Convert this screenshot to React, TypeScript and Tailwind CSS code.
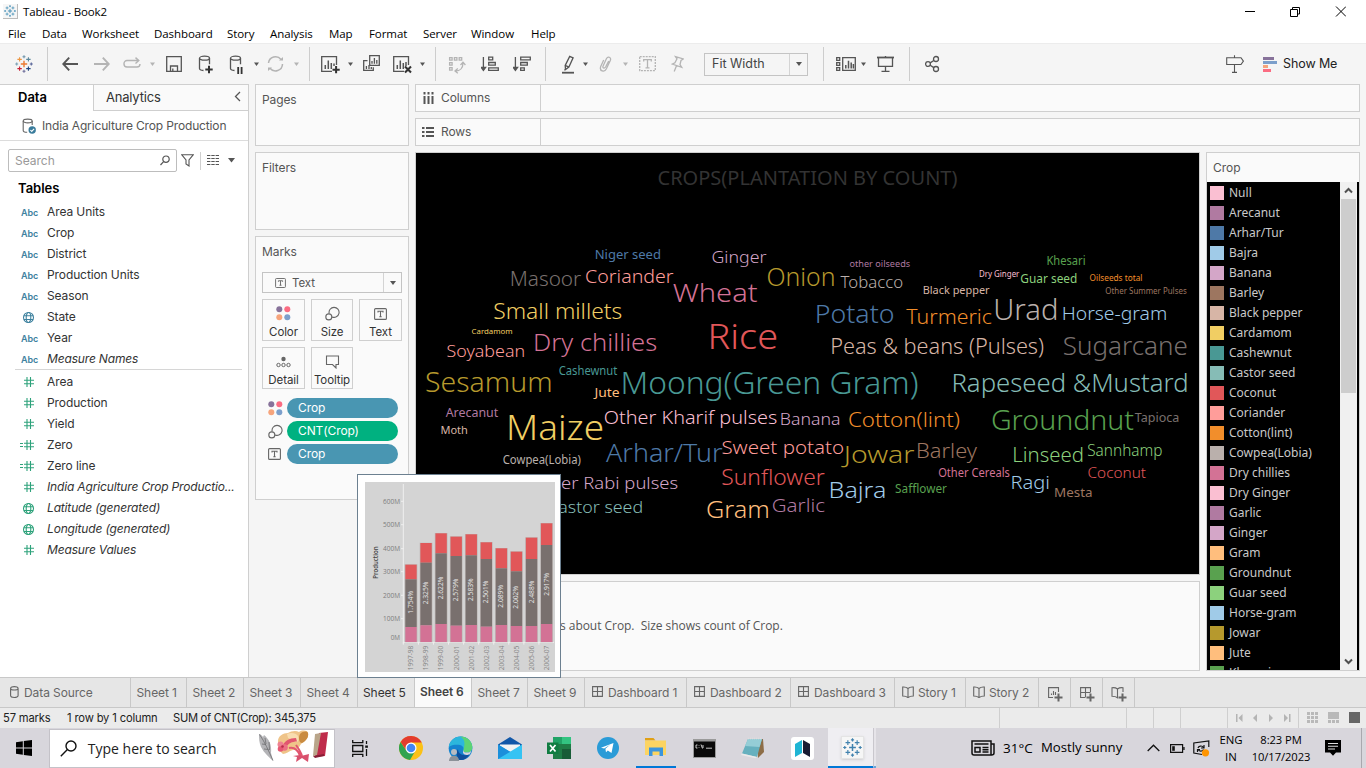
import React from "react";

type P = { w: number; h?: number; c?: string; children?: React.ReactNode };

const Ico = ({ w, h = 20, c = "", children }: P) => (
  <svg width={w} height={h} viewBox={`0 0 ${w} ${h}`} fill="none" stroke="currentColor" strokeWidth="1.3" className={"shrink-0 " + c}>
    {children}
  </svg>
);

const Caret = ({ c = "" }: { c?: string }) => (
  <svg width="5" height="20" viewBox="0 0 5 20" className={"shrink-0 " + c} fill="currentColor">
    <path d="M0 8.5h5L2.5 12z" />
  </svg>
);

const Sep = ({ c = "" }: { c?: string }) => <div className={"h-[34px] w-px shrink-0 bg-[#cdcdcd] " + c} />;

const plus = (x: number, y: number, r: number) => `M${x - r} ${y}h${2 * r}M${x} ${y - r}v${2 * r}`;

function TableauMark({ color, s = 18, c = "" }: { color?: string; s?: number; c?: string }) {
  const col = (v: string) => color || v;
  return (
    <svg width={s} height={s} viewBox="0 0 18 18" fill="none" strokeWidth="1.1" className={"shrink-0 " + c}>
      <path d={plus(9, 9, 3.2)} stroke={col("#eb7a31")} strokeWidth="1.4" />
      <path d={plus(4.6, 4.4, 2.2)} stroke={col("#ec9540")} />
      <path d={plus(13.4, 4.4, 2.2)} stroke={col("#5b879b")} />
      <path d={plus(4.6, 13.6, 2.2)} stroke={col("#c72035")} />
      <path d={plus(13.4, 13.6, 2.2)} stroke={col("#1f447e")} />
      <path d={plus(9, 1.8, 1.5)} stroke={col("#6f95ab")} />
      <path d={plus(9, 16.2, 1.5)} stroke={col("#6f6f9b")} />
      <path d={plus(1.7, 9, 1.5)} stroke={col("#7aa0b5")} />
      <path d={plus(16.3, 9, 1.5)} stroke={col("#59659a")} />
    </svg>
  );
}

const menus: [string, string][] = [
  ["File", "w-[34px]"],
  ["Data", "w-[40px]"],
  ["Worksheet", "w-[72px]"],
  ["Dashboard", "w-[73px]"],
  ["Story", "w-[43px]"],
  ["Analysis", "w-[59px]"],
  ["Map", "w-[40px]"],
  ["Format", "w-[54px]"],
  ["Server", "w-[48px]"],
  ["Window", "w-[60px]"],
  ["Help", "w-[40px]"],
];

function Toolbar() {
  const off = "text-[#b4b4b4] ";
  return (
    <div className="flex h-[41px] items-center border-t border-[#ececec] bg-[#f5f5f5] text-[#555]">
      <TableauMark c="ml-[15px]" />
      <Sep c="ml-[14px]" />
      <Ico w={16} c="ml-[14px]"><path d="M7.2 3.6L1.2 10l6 6.4M1.2 10H16" strokeWidth="1.9" /></Ico>
      <Ico w={16} c={off + "ml-[16px]"}><path d="M8.8 3.6l6 6.4-6 6.4M14.8 10H0" strokeWidth="1.9" /></Ico>
      <Ico w={18} c={off + "ml-[13px]"}><path d="M7 13H4a3 3 0 01-3-3v-.5a3 3 0 013-3h11M7 13h7a3 3 0 003-3M12.5 3.6L15.8 6.5l-3.3 3" strokeWidth="1.4" /></Ico>
      <Caret c={off + "ml-[9px]"} />
      <Ico w={16} c="ml-[11px]"><path d="M.7 2.7h14.6v14.6H.7zM4.5 17v-5h7v5M6.8 17v-2.6" /></Ico>
      <Ico w={15} c="ml-[16px]">
        <path d="M1.5 4.2v10.3c0 1 1.5 1.8 4 2M11.5 4.2v6" /><ellipse cx="6.5" cy="4.2" rx="5" ry="2" />
        <path d="M7.3 15.5h7.4M11 11.8v7.4" stroke="#333" strokeWidth="2" />
      </Ico>
      <Ico w={14} c="ml-[16px]">
        <path d="M1.5 4.2v10.3c0 1 1.5 1.8 4 2M11.5 4.2v6" /><ellipse cx="6.5" cy="4.2" rx="5" ry="2" />
        <path d="M9.2 13v7M12.6 13v7" stroke="#333" strokeWidth="1.8" />
      </Ico>
      <Caret c="ml-[11px]" />
      <Ico w={17} c={off + "ml-[8px]"}><path d="M1.5 9A7 7 0 0114 5.5M15.5 10A7 7 0 013 14.2" strokeWidth="1.5" /><path d="M12 6.5h4V3zM5 13.5H1V17z" fill="currentColor" stroke="none" /></Ico>
      <Caret c={off + "ml-[10px]"} />
      <Sep c="ml-[10px]" />
      <Ico w={19} c="ml-[11px]">
        <path d="M15.5 11V2.6H.7v14.7H11" /><path d="M4.3 15V11M7.3 15V6.5M10.3 15V9M13 12V9.5" strokeWidth="1.5" />
        <path d="M11.5 15.7h7.2M15.1 12.1v7.2" stroke="#333" strokeWidth="2" />
      </Ico>
      <Caret c="ml-[8px]" />
      <Ico w={17} c="ml-[10px]">
        <path d="M6.7 1.7h9.6v9.6H6.7zM4.5 6.7H.7v9.6h9.6v-3" /><path d="M9 9.8V7M11.4 9.8V4M13.8 9.8V6M3.4 15v-3M6 15v-4M8.3 15v-2" />
      </Ico>
      <Ico w={19} c="ml-[13px]">
        <path d="M15.5 11V2.6H.7v14.7H11" /><path d="M4.3 15V11M7.3 15V6.5M10.3 15V9M13 12V8" strokeWidth="1.5" />
        <path d="M12 12.5l6 6M18 12.5l-6 6" stroke="#333" strokeWidth="2.1" />
      </Ico>
      <Caret c="ml-[8px]" />
      <Sep c="ml-[10px]" />
      <Ico w={18} c={off + "ml-[12px]"}>
        <path d="M1.6 3.6h2.5v2.5H1.6zM6.4 3.6h2.5v2.5H6.4zM11.2 3.6h2.5v2.5h-2.5zM1.6 8.6h2.5v2.5H1.6zM1.6 13.6h2.5v2.5H1.6z" />
        <path d="M7.5 17c4.5 0 7.5-3 7.5-8M9.8 14.5L7 17l2.8 2.3M12.5 11L15 8.2l2.4 2.8" />
      </Ico>
      <Ico w={18} c="ml-[15px]"><path d="M2.4 3v12M.2 13.5l2.2 3 2.2-3zM7.7 3.2h4v2.6h-4zM7.7 8.5h6.6v2.6H7.7zM7.7 13.8h9.6v2.6H7.7z" /></Ico>
      <Ico w={18} c="ml-[14px]"><path d="M2.4 3v12M.2 13.5l2.2 3 2.2-3zM7.7 3.2h9.6v2.6H7.7zM7.7 8.5h6.6v2.6H7.7zM7.7 13.8h3.6v2.6H7.7z" /></Ico>
      <Sep c="ml-[14px]" />
      <Ico w={13} c="ml-[16px]"><path d="M7.7 2.4l3.4 1.4-4.2 9.3-3.400 2.400-.3-4.100zM3.200 11.400l3.700 1.700M4 14.500l-1.500 1.800" /><path d="M0 18.700h12" strokeWidth="1.800" /></Ico>
      <Caret c="ml-[8px]" />
      <Ico w={13} c={off + "ml-[11px]"}><path d="M9.7 7L6.6 13c-1.3 2-3.3 1-2.5-1l3.3-7.2c1.5-3 5-1.6 4 1.500l-4 8.500c-2 4-7 2.500-5.800-2L4.700 6" /></Ico>
      <Caret c={off + "ml-[11px]"} />
      <Ico w={17} c={off + "ml-[11px]"}><path d="M.7 2.700h15.600v14H.7z" strokeDasharray="2 1" /><path d="M4.700 7.500V5.600h7.600v1.900M8.500 5.600v8.200M6.500 13.800h4" /></Ico>
      <Ico w={13} c={off + "ml-[15px]"}><path d="M4.500 2.700l7.800 2.300-2.300 1.500-1 4.200 1.700 2.700-9.500-3.300 2.700-1.300L6 4.900zM5.500 11.800l-2.300 5.700" /></Ico>
      <div className="ml-[20px] flex h-[23px] w-[104px] shrink-0 items-center border border-[#c4c4c4] pl-[7px] font-['Inter'] text-[12.5px] text-[#444]">
        <span className="flex-1">Fit Width</span>
        <span className="flex h-full w-[18px] items-center justify-center border-l border-[#d4d4d4]">
          <svg width="6" height="4"><path d="M0 0h6L3 4z" fill="#555" /></svg>
        </span>
      </div>
      <Sep c="ml-[15px]" />
      <Ico w={20} c="ml-[12px]">
        <path d="M6.7 3.7h12.6v12.6H6.7zM.7 3.6h3v2.7h-3zM.7 8.7h3v2.7h-3zM.7 13.6h3v2.7h-3z" /><path d="M9.8 14.5V11M12.5 14.5V6.8M15.2 14.5V8.5M17.400 14.500V10" strokeWidth="1.500" />
      </Ico>
      <Caret c="ml-[5px]" />
      <Ico w={17} c="ml-[11px]"><path d="M0 3.5h17" strokeWidth="1.8" /><path d="M1.5 3.5v8.8h14V3.5M8.5 12.5v5M4.5 17.3h8M8.5 2v2" /></Ico>
      <Sep c="ml-[15px]" />
      <Ico w={15} c="ml-[15px]"><circle cx="3" cy="10" r="2.4" /><circle cx="11" cy="5" r="2.5" /><circle cx="11" cy="15" r="2.5" /><path d="M5.2 8.9l3.6-2.4M5.2 11.2l3.6 2.4" /></Ico>
      <Ico w={18} c="ml-[286px]"><path d="M.7 3.7H15l2.4 3.4-2.4 3.4H.7zM8.5 1.2v2.5M8.5 10.5v8M6 18.4h5" strokeWidth="1.1" /></Ico>
      <svg width="14" height="15" className="ml-[19px] shrink-0"><path fill="#87729a" d="M0 0h11v3H0z" /><path fill="#7c9fcb" d="M0 4h14v3H0z" /><path fill="#f6a47c" d="M0 8h5v3H0z" /><path fill="#fb6c82" d="M0 12h8v3H0z" /></svg>
      <span className="ml-[6px] font-['Inter'] text-[12.5px] tracking-[-0.1px] text-[#222]">Show Me</span>
    </div>
  );
}

const blue = "#3f829f";
const green = "#2ea27b";

function FieldIcon({ k, color }: { k: string; color: string }) {
  if (k === "abc") return <span className="w-[17px] pt-[2px] font-['Inter'] text-[9px] font-semibold leading-[12px] tracking-[-0.1px] text-[#3f829f]">Abc</span>;
  return (
    <svg width="17" height="14" viewBox="0 0 17 14" fill="none" stroke={color} strokeWidth="1.1" className="overflow-visible">
      {k === "geo" ? (
        <><circle cx="7.5" cy="7.500" r="5" /><ellipse cx="7.5" cy="7.500" rx="2.300" ry="5" /><path d="M3 5.700h9M3 9.500h9" /></>
      ) : (
        <path d="M6 2v10M9.500 2v10M3 5.200h10M3 8.800h10" />
      )}
      {k === "calc" && <path d="M-1 5.500h3M-1 8.500h3" />}
    </svg>
  );
}

const dims: [string, string, boolean?][] = [
  ["abc", "Area Units"], ["abc", "Crop"], ["abc", "District"], ["abc", "Production Units"], ["abc", "Season"], ["geo", "State"], ["abc", "Year"], ["abc", "Measure Names", true],
];
const measures: [string, string, boolean?][] = [
  ["num", "Area"], ["num", "Production"], ["num", "Yield"], ["calc", "Zero"], ["calc", "Zero line"], ["num", "India Agriculture Crop Productio...", true], ["geo", "Latitude (generated)", true], ["geo", "Longitude (generated)", true], ["num", "Measure Values", true],
];

function Field({ f, color }: { f: [string, string, boolean?]; color: string }) {
  return (
    <div className="flex h-[21px] items-center pl-[21px]">
      <FieldIcon k={f[0]} color={color} />
      <span className={"ml-[9px] whitespace-nowrap " + (f[2] ? "italic tracking-[-0.16px]" : "tracking-[-0.1px]")}>{f[1]}</span>
    </div>
  );
}

function DataPane() {
  return (
    <div className="h-[593px] w-[249px] shrink-0 border-r border-t border-[#cfcfcf] bg-white font-['Inter'] text-[12px] text-[#333]">
      <div className="flex h-[26px]">
        <div className="w-[93px] pl-[18px] pt-[3px] text-[13px] font-semibold leading-[18px] text-black">Data</div>
        <div className="flex flex-1 justify-between border-b border-l border-[#cfcfcf] bg-[#fafafa] pl-[12px] pr-[7px] pt-[3px] text-[13px] leading-[18px] tracking-[-0.2px]">
          <span>Analytics</span>
          <svg width="7" height="11" className="mt-[3px]"><path d="M6 1L1.5 5.5 6 10" fill="none" stroke="#555" strokeWidth="1.3" /></svg>
        </div>
      </div>
      <div className="flex h-[30px] items-center border-b border-[#dcdcdc] pl-[22px] text-[#555]">
        <svg width="14" height="16" fill="none" stroke="#666" strokeWidth="1.1"><path d="M1.2 3v9.5c0 1 1.4 1.8 4 1.8M10.2 3v4" /><ellipse cx="5.7" cy="3" rx="4.5" ry="1.9" /><circle cx="10.2" cy="12" r="3.7" fill="#3a7c9c" stroke="none" /><path d="M8.4 12l1.3 1.4 2.4-2.6" stroke="#fff" /></svg>
        <span className="ml-[6px] whitespace-nowrap tracking-[-0.15px]">India Agriculture Crop Production</span>
      </div>
      <div className="mt-[8px] flex h-[23px] items-center pl-[8px]">
        <div className="flex h-[23px] w-[169px] items-center justify-between rounded-[2px] border border-[#bdbdbd] pl-[6px] pr-[6px] text-[#999]">
          <span>Search</span>
          <svg width="10" height="11" fill="none" stroke="#555" strokeWidth="1.2"><circle cx="6" cy="4.2" r="3.2" /><path d="M3.6 6.6L.5 10" /></svg>
        </div>
        <svg width="13" height="13" className="ml-[4px]" fill="none" stroke="#555" strokeWidth="1.1"><path d="M.8.8h11.4L8 6v6L5 10V6z" /></svg>
        <div className="ml-[6px] h-[18px] w-px bg-[#d0d0d0]" />
        <svg width="12" height="10" className="-mt-px ml-[6px]" stroke="#555" strokeWidth="1"><path d="M0 .5h12M0 3.500h12M0 6.500h12M0 9.500h12" strokeDasharray="3.400 .9" /></svg>
        <svg width="7" height="5" className="ml-[9px]"><path d="M0 0h7L3.500 4.500z" fill="#555" /></svg>
      </div>
      <div className="mt-[6px] h-[23px] pl-[18px] text-[13px] font-semibold leading-[20px] text-black">Tables</div>
      {dims.map((f) => <Field key={f[1]} f={f} color={blue} />)}
      <div className="mb-px ml-[15px] mr-[6px] border-t border-[#d6d6d6]" />
      {measures.map((f) => <Field key={f[1]} f={f} color={green} />)}
    </div>
  );
}

const Dots = () => (
  <svg width="15" height="15"><circle cx="3.3" cy="3.3" r="3" fill="#87729a" /><circle cx="11.300" cy="3.300" r="3" fill="#fb6c82" /><circle cx="3.300" cy="11.300" r="3" fill="#f6a47c" /><circle cx="11.300" cy="11.300" r="3" fill="#7c9fcb" /></svg>
);
const SizeIco = () => (
  <svg width="15" height="15" fill="none" stroke="#666" strokeWidth="1.1"><path d="M4.200 7.500A5 5 0 117 10.900" /><circle cx="3.800" cy="10.900" r="3" /></svg>
);
const TIco = ({ w = 13, h = 12 }: { w?: number; h?: number }) => (
  <svg width={w} height={h} viewBox="0 0 13 12" fill="none" stroke="#666" strokeWidth="1.1"><rect x=".6" y=".6" width="11.8" height="10.8" rx="1" /><path d="M4 4.500V3.300h5v1.200M6.500 3.300v5.400M5.300 8.700h2.400" /></svg>
);

function MarkBtn({ w, label, children }: { w: string; label: string; children: React.ReactNode }) {
  return (
    <div className={"flex h-[42px] flex-col items-center border border-[#cfcfcf] bg-[#fafafa] text-[11.5px] tracking-[-0.1px] text-[#333] " + w}>
      <div className="flex h-[26px] items-center pt-[1px]">{children}</div>
      <span className="whitespace-nowrap leading-[13px]">{label}</span>
    </div>
  );
}

function Marks() {
  const pills: [React.ReactNode, string, string][] = [
    [<Dots />, "Crop", "bg-[#4996b2]"],
    [<SizeIco />, "CNT(Crop)", "bg-[#00b180]"],
    [<TIco />, "Crop", "bg-[#4996b2]"],
  ];
  return (
    <div className="mt-[6px] h-[264px] border border-[#cfcfcf] bg-[#fafafa] px-[6px] pt-[7px]">
      <div className="leading-[16px]">Marks</div>
      <div className="mt-[12px] flex h-[21px] items-center border border-[#c4c4c4] pl-[12px] text-[11.5px]">
        <TIco w={11} h={10} />
        <span className="ml-[6px] flex-1 pt-[2px]">Text</span>
        <span className="flex h-full w-[18px] items-center justify-center border-l border-[#d4d4d4]"><svg width="6" height="4"><path d="M0 0h6L3 4z" fill="#555" /></svg></span>
      </div>
      <div className="mt-[6px] flex gap-[6px]">
        <MarkBtn w="w-[43px]" label="Color"><Dots /></MarkBtn>
        <MarkBtn w="w-[42px]" label="Size"><SizeIco /></MarkBtn>
        <MarkBtn w="w-[43px]" label="Text"><TIco /></MarkBtn>
      </div>
      <div className="mt-[6px] flex gap-[6px]">
        <MarkBtn w="w-[43px]" label="Detail">
          <svg width="15" height="12" fill="none" stroke="#666"><circle cx="7.500" cy="3" r="2.200" fill="#666" stroke="none" /><circle cx="2.500" cy="9" r="1.700" /><circle cx="7.500" cy="9" r="1.700" /><circle cx="12.500" cy="9" r="1.700" /></svg>
        </MarkBtn>
        <MarkBtn w="w-[42px]" label="Tooltip">
          <svg width="15" height="14" fill="none" stroke="#666" strokeWidth="1.100"><path d="M1.500 1h12v8.500h-2.500v3.500l-3.500-3.500h-6z" /></svg>
        </MarkBtn>
      </div>
      <div className="mt-[9px] flex flex-col gap-[3px]">
        {pills.map((p, i) => (
          <div key={i} className="flex h-[20px] items-center pl-[6px]">
            <div className="w-[19px]">{p[0]}</div>
            <div className={"flex h-[20px] w-[111px] items-center rounded-full pl-[11px] text-white " + p[2]}>{p[1]}</div>
          </div>
        ))}
      </div>
    </div>
  );
}

const C: Record<string, string> = {
  blue: "#4e79a7", lblue: "#a0cbe8", or: "#f28e2b", lor: "#ffbe7d", gr: "#59a14f", lgr: "#8cd17d", ol: "#b6992d", ye: "#f1ce63", te: "#499894", lte: "#86bcb6", red: "#e15759", pk: "#ff9d9a", gy: "#79706e", lgy: "#bab0ac", mg: "#d37295", lpk: "#fabfd2", pu: "#b07aa1", lpu: "#d4a6c8", br: "#9d7660", lbr: "#d7b5a6",
};

const words: [string, number, number, number, number, string][] = [
  ["Niger seed", 595.3, 660.3, 259.3, 13, "blue"], ["Ginger", 712.3, 765.7, 263.3, 16.8, "lpu"], ["Masoor", 510.7, 580.3, 286.3, 19.3, "gy"],
  ["Coriander", 586, 672.7, 283, 17.6, "pk"], ["Wheat", 674, 756.3, 302, 25.8, "mg"], ["Onion", 767.7, 834.3, 286, 25, "ol"],
  ["Small millets", 494.3, 621.3, 319, 20.8, "ye"], ["Cardamom", 472, 512.3, 333.7, 7.8, "ye"], ["Soyabean", 447.3, 524.3, 356.8, 16.4, "pk"],
  ["Dry chillies", 534.3, 656, 350.8, 23.3, "mg"], ["Rice", 709.3, 776.3, 348.7, 35, "red"], ["Sesamum", 426.3, 551.3, 392.4, 26, "ol"],
  ["Cashewnut", 559.3, 616.7, 375, 11.6, "te"], ["Jute", 595, 619, 397, 11.8, "lor"], ["Moong(Green Gram)", 622, 917, 393.7, 30, "te"],
  ["Arecanut", 446.3, 497.7, 417, 12, "pu"], ["Moth", 441, 467.3, 434, 11.4, "lbr"], ["Maize", 507.7, 602.3, 439.9, 34, "ye"],
  ["Other Kharif pulses", 604.7, 776.3, 424, 18.2, "lpk"], ["Banana", 780.7, 839.7, 425, 16.6, "lpu"], ["Cowpea(Lobia)", 503.3, 580.3, 464.2, 11.6, "lgy"],
  ["Arhar/Tur", 607.3, 721.3, 462, 25, "blue"], ["Sweet potato", 722.3, 843.3, 453.8, 17.9, "pk"], ["Sunflower", 722.3, 823.7, 485.2, 20.8, "red"],
  ["Other Rabi pulses", 530.5, 677.3, 489, 16.8, "lpu"], ["Castor seed", 548, 642.3, 513.3, 16.8, "lte"], ["Gram", 707.3, 768.7, 518, 24, "lor"],
  ["Garlic", 772.7, 824, 512, 18.6, "pu"], ["other oilseeds", 850, 909.7, 266.7, 9.4, "pu"], ["Tobacco", 841.3, 902.3, 288.3, 15.8, "lgy"],
  ["Black pepper", 923.3, 989, 294, 11.4, "lbr"], ["Dry Ginger", 979.3, 1019, 277, 8, "lpk"], ["Guar seed", 1021, 1076.7, 283, 12.6, "lgr"],
  ["Khesari", 1047, 1085, 265, 11.6, "gr"], ["Oilseeds total", 1090, 1142, 281, 8, "or"], ["Other Summer Pulses", 1105.7, 1186.3, 294, 8, "br"],
  ["Potato", 816, 893.3, 323.2, 24.5, "blue"], ["Turmeric", 907.3, 991, 324.3, 19.6, "or"], ["Urad", 994.7, 1057, 319.6, 28.3, "lgy"],
  ["Horse-gram", 1062.7, 1166.3, 320.1, 18.4, "lblue"], ["Peas & beans (Pulses)", 831.3, 1043, 354.2, 21.2, "lbr"], ["Sugarcane", 1064, 1186.7, 355.4, 24.5, "gy"],
  ["Rapeseed &Mustard", 952.7, 1187.3, 392.1, 25, "lte"], ["Cotton(lint)", 849, 959, 427.2, 19.6, "or"], ["Groundnut", 992.3, 1132.7, 430, 27.2, "gr"],
  ["Tapioca", 1135.3, 1178.7, 422.3, 12, "gy"], ["Jowar", 845, 913.3, 463, 23, "ol"], ["Barley", 917, 976, 458.2, 19.2, "br"],
  ["Linseed", 1013.3, 1083, 462.2, 19.8, "lgr"], ["Sannhamp", 1088, 1161.7, 456.4, 15.6, "lgr"], ["Other Cereals", 938.7, 1009.3, 477, 11.5, "mg"],
  ["Coconut", 1088.3, 1145.3, 478, 14.7, "red"], ["Ragi", 1011.3, 1049, 488.8, 17.6, "lblue"], ["Mesta", 1054.7, 1092, 497, 12.7, "br"],
  ["Bajra", 829.7, 885.3, 498, 21.2, "lblue"], ["Safflower", 895.7, 946.3, 493, 11.6, "gr"],
];

function Cloud() {
  return (
    <svg width="783" height="421" viewBox="416 153 783 421" className="block" fontFamily="'Noto Sans', 'Open Sans', sans-serif">
      <text x="657.500" y="185" fontSize="19.800" fill="#333" textLength="300" lengthAdjust="spacingAndGlyphs">CROPS(PLANTATION BY COUNT)</text>
      {words.map(([t, x0, x1, y, s, c]) => (
        <text key={t} x={x0 - s * 0.05} y={y} fontSize={s * 1.02} fontWeight={s > 13.5 ? 300 : 400} fill={C[c]} textLength={x1 - x0 + s * 0.1} lengthAdjust="spacingAndGlyphs">{t}</text>
      ))}
    </svg>
  );
}

const legend: [string, string][] = [
  ["Null", "lpk"], ["Arecanut", "pu"], ["Arhar/Tur", "blue"], ["Bajra", "lblue"], ["Banana", "lpu"], ["Barley", "br"], ["Black pepper", "lbr"], ["Cardamom", "ye"], ["Cashewnut", "te"], ["Castor seed", "lte"], ["Coconut", "red"], ["Coriander", "pk"], ["Cotton(lint)", "or"], ["Cowpea(Lobia)", "lgy"], ["Dry chillies", "mg"], ["Dry Ginger", "lpk"], ["Garlic", "pu"], ["Ginger", "lpu"], ["Gram", "lor"], ["Groundnut", "gr"], ["Guar seed", "lgr"], ["Horse-gram", "lblue"], ["Jowar", "ol"], ["Jute", "lor"], ["Khesari", "gr"],
];

function Legend() {
  return (
    <div className="flex h-[519px] w-[154px] shrink-0 flex-col border border-[#cfcfcf] bg-[#fafafa]">
      <div className="h-[29px] shrink-0 pl-[6px] pt-[7px] leading-[16px]">Crop</div>
      <div className="flex min-h-0 flex-1 overflow-hidden bg-black">
        <div className="flex-1 pt-px font-['Noto_Sans'] text-[12px] text-[#c9c9c9]">
          {legend.map(([t, c]) => (
            <div key={t} className="flex h-[20px] items-center pl-[3px]">
              <svg width="14" height="14" className="-mt-px shrink-0"><rect width="14" height="14" fill={C[c]} /></svg>
              <span className="ml-[5px] whitespace-nowrap">{t}</span>
            </div>
          ))}
        </div>
        <div className="flex w-[17px] flex-col bg-[#f0f0f0]">
          <svg width="17" height="17"><path d="M5 10.500l3.500-3.500 3.500 3.500" fill="none" stroke="#505050" strokeWidth="2" /></svg>
          <div className="mx-px h-[194px] bg-[#cdcdcd]" />
          <div className="flex-1" />
          <svg width="17" height="17"><path d="M5 6.500l3.500 3.500 3.500-3.500" fill="none" stroke="#505050" strokeWidth="2" /></svg>
        </div>
        <div className="w-[2px]" />
      </div>
    </div>
  );
}

const bars: [string, string, number, number, number, number][] = [
  ["1997-98", "1.754%", 283, 327, 470, 397], ["1998-99", "2.325%", 218, 277, 465, 369], ["1999-00", "2.622%", 189, 249, 461, 354], ["2000-01", "2.579%", 199, 257, 466, 360], ["2001-02", "2.583%", 192, 255, 464, 359],
  ["2002-03", "2.501%", 216, 266, 469, 366], ["2003-04", "2.089%", 234, 294, 464, 379], ["2004-05", "2.002%", 244, 303, 467, 382], ["2005-06", "2.488%", 202, 266, 467, 366], ["2006-07", "2.917%", 159, 224, 461, 343],
];

function Preview() {
  return (
    <div className="absolute left-[357px] top-[474px] h-[204px] w-[204px] border border-[#6c8090] bg-white p-[7px]">
      <svg width="190" height="190" viewBox="45 36 570 570" fontFamily="'Open Sans', sans-serif">
        <path fill="#d4d4d4" d="M45 36h570v570H45z" />
        <path d="M160 42v478M160 517h452" stroke="#efefef" strokeWidth="3" />
        {["600M", "500M", "400M", "300M", "200M", "100M", "0M"].map((t, i) => {
          const y = [94, 164, 236, 305, 376, 446, 504][i];
          return (
            <g key={t}>
              {i < 6 && <path d={`M153 ${y}h8`} stroke="#efefef" strokeWidth="3" />}
              <text x="150" y={y + 7} fontSize="20" fill="#7d7d7d" textAnchor="end" textLength={i < 6 ? 51 : 28} lengthAdjust="spacingAndGlyphs">{t}</text>
            </g>
          );
        })}
        <text transform="translate(83 278) rotate(-90)" fontSize="19" fontWeight="600" fill="#444" textAnchor="middle" textLength="97" lengthAdjust="spacingAndGlyphs">Production</text>
        {bars.map(([yr, pc, r, g, p, c], i) => {
          const x = 165 + i * 45.2;
          return (
            <g key={yr}>
              <path fill="#bdb6b4" d={`M${x - 1} ${r}h38V517h-38z`} />
              <rect x={x + 1} y={r + 1} width="34" height={g - r} fill="#e15759" />
              <rect x={x + 1} y={g + 1} width="34" height={p - g} fill="#79706e" />
              <rect x={x + 1} y={p + 1} width="34" height={515 - p} fill="#d37295" />
              <path d={`M${x - 5} 517v7`} stroke="#efefef" strokeWidth="3" />
              <text transform={`translate(${x + 24} ${c}) rotate(-90)`} fontSize="20" fill="#e8e8e8" textAnchor="middle" textLength="68" lengthAdjust="spacingAndGlyphs">{pc}</text>
              <text transform={`translate(${x + 25} 564) rotate(-90)`} fontSize="20" fill="#858585" textAnchor="middle" textLength="74" lengthAdjust="spacingAndGlyphs">{yr}</text>
            </g>
          );
        })}
      </svg>
    </div>
  );
}

const Grid4 = ({ c = "" }: { c?: string }) => <Ico w={11} h={11} c={c}><path d="M.6.600h9.800v9.800H.6zM5.500.6v9.800M.6 5.500h9.800" strokeWidth="1.100" /></Ico>;
const Book = ({ c = "" }: { c?: string }) => <Ico w={12} h={12} c={c}><path d="M6 2.500C4.500 1.200 2.500.8.700 1v9c2 0 3.800.4 5.300 1.600C7.500 10.400 9.300 10 11.300 10V1C9.500.8 7.500 1.200 6 2.500zM6 2.500v9" strokeWidth="1.100" /></Ico>;

function SheetTabs() {
  const tabs: [string, string, string][] = [
    ["Sheet 1", "w-[56px]", "s"], ["Sheet 2", "w-[57px]", "s"], ["Sheet 3", "w-[57px]", "s"], ["Sheet 4", "w-[57px]", "s"], ["Sheet 5", "w-[57px]", "s5"], ["Sheet 6", "w-[57px]", "a"], ["Sheet 7", "w-[56px]", "s"], ["Sheet 9", "w-[57px]", "s"],
    ["Dashboard 1", "w-[102px]", "d"], ["Dashboard 2", "w-[104px]", "d"], ["Dashboard 3", "w-[104px]", "d"], ["Story 1", "w-[71px]", "b"], ["Story 2", "w-[73px]", "b"],
  ];
  const P = <path d="M7.500 11.500h8M11.500 7.500v8" strokeWidth="2" />;
  return (
    <div className="flex h-[31px] border-y border-[#c8c8c8] bg-[#e6e6e6] font-['Inter'] text-[12px] leading-[29px] tracking-[-0.08px] text-[#666]">
      <div className="flex w-[131px] items-center border-r border-[#c8c8c8] pl-[10px]">
        <Ico w={9} h={12} c="-mt-[2px]"><path d="M.6 2.500v7c0 2.600 7.500 2.600 7.500 0v-7c0-2.500-7.500-2.500-7.500 0c0 2 7.500 2 7.500 0" strokeWidth="1.100" /></Ico>
        <span className="ml-[5px]">Data Source</span>
      </div>
      {tabs.map(([t, w, k]) => (
        <div key={t} className={"flex shrink-0 items-center whitespace-nowrap border-r border-[#c8c8c8] " + w + (k === "a" ? " bg-[#fafafa] pb-[2px] pl-[5px] font-semibold text-[#444]" : k === "s5" ? " pl-[5px] text-[#333]" : k === "s" ? " pl-[5.500px]" : " pl-[7px]")}>
          {k === "d" && <Grid4 c="mr-[5px] -mt-[2px]" />}
          {k === "b" && <Book c="mr-[4px] -mt-[2px]" />}
          {t}
        </div>
      ))}
      <div className="flex w-[32px] items-center justify-center border-r border-[#c8c8c8] pt-[2px]"><Ico w={16} h={16}><path d="M11.500 6V1.600H1.600v9.900H6M4.500 9V7.500M6.500 9V5M8.500 9V6" strokeWidth="1.100" />{P}</Ico></div>
      <div className="flex w-[32px] items-center justify-center border-r border-[#c8c8c8] pt-[2px]"><Ico w={16} h={16}><path d="M11.500 6V1.600H1.600v9.900H6M6.500 1.600v9.900M1.600 6.500h9.900" strokeWidth="1.100" />{P}</Ico></div>
      <div className="flex w-[32px] items-center justify-center border-r border-[#c8c8c8] pt-[2px]"><Ico w={16} h={16}><path d="M6.500 3C5 1.800 3 1.500 1 1.700v8.500c2 0 4 .3 5.500 1.500V3C8 1.800 10 1.500 12 1.700V6" strokeWidth="1.100" />{P}</Ico></div>
    </div>
  );
}

function StatusBar() {
  return (
    <div className="flex h-[20px] items-center bg-[#ebebeb] pl-[3px] font-['Inter'] text-[11.2px] tracking-[-0.15px] text-[#222]">
      <span className="w-[64px]">57 marks</span>
      <span className="w-[106px] whitespace-nowrap">1 row by 1 column</span>
      <span className="w-[826px] tracking-[-0.3px]">SUM of CNT(Crop): 345,375</span>
      <div className="h-full w-[127px] border-l border-[#cfcfcf]" />
      <div className="h-full w-[27px] border-l border-[#cfcfcf]" />
      <div className="h-full w-[27px] border-l border-[#cfcfcf]" />
      <div className="h-full w-[47px] border-l border-[#cfcfcf]" />
      <div className="flex h-full w-[71px] items-center border-l border-[#cfcfcf] pl-[8px]">
        <svg width="56" height="8" fill="#b4b4b4"><path d="M0 0h1.500v8H0zM6.500 0v8L2.500 4zM21 0v8l-4-4zM33 0v8l4-4zM48 0v8l4-4zM53 0h1.500v8H53z" /></svg>
      </div>
      <div className="flex h-full items-center border-l border-[#cfcfcf] pl-[8px]">
        <svg width="54" height="12" fill="#b9b9b9"><path d="M0 0h3v3H0zM4 0h3v3H4zM8 0h3v3H8zM0 4h3v3H0zM4 4h3v3H4zM8 4h3v3H8zM0 8h3v3H0zM4 8h3v3H4zM8 8h3v3H8zM21 0h11v7H21zM21 8h3v3h-3zM25 8h3v3h-3zM29 8h3v3h-3z" /><path d="M42 0h11v11H42z" fill="#666" /></svg>
      </div>
    </div>
  );
}

function Taskbar() {
  return (
    <div className="flex h-[40px] items-center bg-[#d8d6dc] font-['Open_Sans'] text-[12px] text-black">
      <svg width="16" height="16" className="ml-[16px] shrink-0"><path d="M0 2.300L6.800 1.300V7.500H0zM7.800 1.100L16 0v7.500H7.800zM0 8.500h6.800v6.200L0 13.700zM7.800 8.500H16V16L7.800 14.900z" /></svg>
      <div className="ml-[17px] flex h-[39px] w-[286px] shrink-0 items-center border border-[#c4c2c8] bg-white pl-[10px]">
        <svg width="17" height="17" fill="none" stroke="#111" strokeWidth="1.400"><circle cx="11" cy="6" r="5" /><path d="M7.400 9.600L.8 16.200" /></svg>
        <span className="ml-[11px] w-[168px] whitespace-nowrap text-[14px] text-[#222]">Type here to search</span>
        <svg width="76" height="36" viewBox="0 0 76 36" className="ml-[4px] shrink-0">
          <path d="M1 4c2 0 3 2 4 3l1-2c5 4 8 10 7 18l2 8c-4-4-9-8-12-14C1 12 1 8 1 4z" fill="#b4b4b7" />
          <path d="M1.500 4.500c5 7 9 16 13.500 26M4 14l4 .5M6 19l4.500.5M7 8l1 6M11 12l.5 8" stroke="#6d6d70" strokeWidth=".8" fill="none" />
          <path d="M20 11c0-5 5-8 10-8 3-2 8-3 11-1 3-2 8-2 9 1 1 5-3 8-7 11-2 4-5 6-8 6-4 1-7 4-10 4-4-3-5-9-5-13z" fill="#efc489" />
          <path d="M42 4c3-3 7-3 8-1 1 4-2 8-6 10-3 0-4-5-2-9z" fill="#c98b40" />
          <path d="M29 4c4-2 9-1 11 2 1 3 1 5-1 6l-9-4z" fill="#f8ddb0" />
          <path d="M25 15c2-4 6-7 13-7l1 3.500c-5 0-9 2-11 6z" fill="#e2566f" />
          <circle cx="22.500" cy="14.500" r="3" fill="#ee8292" /><circle cx="26.500" cy="17.500" r="3.300" fill="#ec6f84" /><circle cx="22.500" cy="19" r="2.800" fill="#e65873" /><circle cx="24.500" cy="16.500" r="1.300" fill="#b92c49" />
          <path d="M31 18c5-1 9 2 11 8M38 15c2 3 5 7 6 11" stroke="#e2566f" strokeWidth="2" fill="none" />
          <path d="M43 26l8-2-1 8-6-4-6 4 1-5-4-1 7-1z" fill="#d9506c" />
          <path d="M61 3l9-1-3 24-10 1z" fill="#bf2c4b" /><path d="M57 4l6-1-4 22-4 1z" fill="#b9a58a" /><path d="M55 26l11-2v2l-9 2z" fill="#861f35" />
        </svg>
      </div>
      <svg width="17" height="17" className="ml-[17px] shrink-0" fill="none" stroke="#111" strokeWidth="1.300"><path d="M.700 0v2.700h10.100V0M.7 5.500h10.100v6H.7zM.7 17v-2.700h10.100V17M14.500 1v3M14.500 9v7" /><path d="M13.200 5.500h2.700v2.300h-2.700z" fill="#111" stroke="none" /></svg>
      <svg width="24" height="24" viewBox="0 0 24 24" className="ml-[30px] shrink-0">
        <circle cx="12" cy="12" r="12" fill="#fbc116" /><path d="M1.600 6A12 12 0 0011 24l5.500-9.500L7 14z" fill="#31a350" /><path d="M12 6.500h10.700a12 12 0 00-21-.500L7 14z" fill="#e33b2e" /><circle cx="12" cy="12" r="5.500" fill="#fff" /><circle cx="12" cy="12" r="4.300" fill="#4285f4" />
      </svg>
      <svg width="25" height="25" viewBox="0 0 25 25" className="ml-[25px] shrink-0">
        <circle cx="12.500" cy="12.300" r="11.800" fill="#1583cf" />
        <path d="M.8 11C1.500 5 6.500.500 12.500.500c6.500 0 11.800 4.700 11.800 10.500 0 3.800-2.600 5.500-5.500 5.500-2.500 0-4-.8-3.300-2.500.8-2.500-1.500-5-5-5.200C6.500 8.600 3 9 .8 11z" fill="#2cb6dc" />
        <path d="M12.500.500c6.500 0 11.800 4.700 11.800 10.500 0 3.800-2.600 5.500-5.500 5.500-2.500 0-4-.8-3.300-2.500C16.500 9 18 4 12.500.5z" fill="#5dd374" />
        <path d="M15.500 14c-.5 2 1 2.500 3.300 2.500 2 0 3.500-.5 4.500-1.800-.3 1.300-1 2.600-1.800 3.700-4 1.500-8-.5-6-4.400z" fill="#d8d6dc" />
        <path d="M10 13c0 5 5 7.500 11.500 5.500-3 4.500-6 6-10 5.500-3-3-4-8-1.500-11z" fill="#0e4f9c" />
        <circle cx="6" cy="16" r="3" fill="#b8bcc2" /><path d="M1 25c0-7 10-7 10 0z" fill="#8c9198" />
      </svg>
      <svg width="24" height="22" viewBox="0 0 24 22" className="ml-[25px] shrink-0"><path d="M0 7.500L12 0l12 7.500V12H0z" fill="#1257a8" /><path d="M2 7.500h20V14H2z" fill="#f3f3f3" /><path d="M0 7.500L24 22H0z" fill="#28a8ea" /><path d="M24 7.500V22L0 22z" fill="#35c3f3" /><path d="M0 7.500l12 7.300L0 22z" fill="#1b8fdb" /></svg>
      <svg width="24" height="22" viewBox="0 0 24 22" className="ml-[25px] shrink-0"><path d="M6 0h18v22H6z" fill="#1f7c46" /><path d="M15 0h9v7h-9z" fill="#33c481" /><path d="M6 0h9v7H6z" fill="#21a366" /><path d="M15 12h9v10h-9z" fill="#185c37" /><path d="M0 5.500h11.500v11.500H0z" fill="#107c41" /><path d="M3 8l5.500 6.500M8.500 8L3 14.500" stroke="#fff" strokeWidth="1.700" /></svg>
      <svg width="22" height="22" viewBox="0 0 22 22" className="ml-[26px] shrink-0"><circle cx="11" cy="11" r="11" fill="#2a9bd7" /><path d="M4 10.800L16.500 6 14.500 16l-3.700-2.600L9 15.200l-.6-3.400 5-4.200-6.200 3.800z" fill="#fff" /></svg>
      <div className="ml-[17px] flex h-[40px] w-[40px] shrink-0 flex-col items-center justify-between border-b-2 border-[#0078d7] pt-[9px]">
        <svg width="22" height="20" viewBox="0 0 22 20"><path d="M0 1h8.500l2 2.500H0z" fill="#e0a016" /><path d="M0 3.500h21V18H0z" fill="#fcd462" /><path d="M4 19v-8.500h14V19h-3.500v-4.500h-7V19z" fill="#3b95dd" /></svg>
      </div>
      <svg width="23" height="19" viewBox="0 0 23 19" className="ml-[17px] shrink-0"><path d="M0 0h23v19H0z" fill="#9a9a9a" /><path d="M1 2.500h21V18H1z" fill="#0a0a0a" /><path d="M3 6h1.500M3 6v3h1.500M6 6v.6M6 8.400v.6M8 5.500l1.500 4M10 6v3M13 9.200h6" stroke="#ddd" strokeWidth=".9" fill="none" /></svg>
      <svg width="24" height="22" viewBox="0 0 24 22" className="ml-[25px] shrink-0"><path d="M16 2h6l1 13-6 6z" fill="#8d6d47" /><path d="M7 2h14l-5 18L1 16.500z" fill="#66b0be" /><path d="M7 2h14l-2.500 8L4 9z" fill="#95cdd6" /><path d="M1 16.500L16 20l-1.500 1.200L0 18z" fill="#e9e9e9" /><path d="M7 1.500h14" stroke="#ddd" strokeWidth="1.500" strokeDasharray="1 1" /></svg>
      <svg width="23" height="23" viewBox="0 0 23 23" className="ml-[26px] shrink-0"><rect width="23" height="23" rx="3" fill="#fff" /><path d="M4 7l7-4v13l-7 4z" fill="#1fb5d4" /><path d="M12 3l7 4v13l-7-4z" fill="#191c33" /></svg>
      <div className="ml-[14px] flex h-[40px] w-[45px] shrink-0 items-center justify-center border-b-2 border-[#0078d7] bg-[#efeef2] pl-[3px]">
        <div className="border border-[#e4e4e4] bg-[#f6f6f6] p-[1px] shadow"><TableauMark color="#4182ae" s={19} /></div>
      </div>
      <div className="h-[40px] w-[3px] shrink-0 border-b-2 border-l border-b-[#69a5dc] border-l-[#c9c7cd] bg-[#e6e4e9]" />
      <svg width="24" height="16" className="ml-[95px] shrink-0" fill="none" stroke="#111" strokeWidth="1.500"><path d="M1 1h19v14H3c-1.500 0-2-1-2-2zM20 4h3v9c0 1.500-1 2-2.500 2M3.500 4h14" /><path d="M4 7.500h5v4.500H4zM11.500 7.500h6M11.500 9.800h6M11.500 12h6" /></svg>
      <span className="ml-[8px] w-[38px] text-[13.500px]">31°C</span>
      <span className="w-[106px] whitespace-nowrap text-[13.200px]">Mostly sunny</span>
      <svg width="13" height="8" className="shrink-0" fill="none" stroke="#111" strokeWidth="1.300"><path d="M.7 7l5.800-5.800L12.300 7" /></svg>
      <svg width="15" height="9" className="ml-[10px] shrink-0" fill="none" stroke="#111" strokeWidth="1.200"><path d="M.6.600h12v7.800H.6zM14 3v3" /><path d="M2.200 2.200h2.600v4.600H2.200z" fill="#111" stroke="none" /></svg>
      <svg width="17" height="17" className="ml-[8px] shrink-0" fill="none" stroke="#111" strokeWidth="1.200"><path d="M9 14.500L.8 13V3l15-2v6M5 8c.5-2 4-3 5.500-.5M11 5v3H8M10.500 9.500c-1 2-4 2-5 .5M4.500 12V9.500H7" /><circle cx="12.500" cy="12.800" r="3.600" fill="#ff9500" stroke="none" /></svg>
      <div className="ml-[6px] flex w-[30px] shrink-0 flex-col items-center text-[11.400px] leading-[17px]"><span>ENG</span><span>IN</span></div>
      <div className="ml-[2px] flex w-[66px] shrink-0 flex-col items-center text-[11.200px] leading-[17px] tracking-[-0.08px]"><span>8:23 PM</span><span>10/17/2023</span></div>
      <svg width="16" height="16" className="ml-[11px] shrink-0"><path d="M0 0h16v12.500h-5L8 15.800l-3-3.300H0z" fill="#000" /><path d="M3 3.500h10M3 6.200h10M3 9h7" stroke="#ddd" strokeWidth="1.100" /></svg>
      <div className="ml-[20px] h-full w-px bg-[#a9a8ae]" />
    </div>
  );
}

export default function App() {
  return (
    <div className="relative h-[768px] w-[1366px] overflow-hidden bg-[#f5f5f5]">
      <div className="flex h-[43px] flex-col bg-white font-['Open_Sans'] text-[11.500px] text-black">
        <div className="flex h-[23px] items-center">
          <div className="ml-[3px] border-b border-r border-[#bbb] bg-[#f6f6f6] p-px"><TableauMark color="#3c8ab4" s={12} /></div>
          <span className="ml-[5px] flex-1 tracking-[-0.15px]">Tableau - Book2</span>
          <svg width="101" height="12" fill="none" stroke="#000"><path d="M0 5.500h10M45.500 3.500h7V10.500h-7zM47.500 3V1.500h7V8H53M91 .5l10 10M101 .5l-10 10" /></svg>
          <div className="w-[20px]" />
        </div>
        <div className="flex h-[20px] items-center pl-[8px] pt-px leading-[20px]">
          {menus.map(([t, w]) => <span key={t} className={w + " tracking-[-0.08px]"}>{t}</span>)}
        </div>
      </div>
      <Toolbar />
      <div className="flex h-[593px]">
        <DataPane />
        <div className="ml-[6px] w-[154px] shrink-0 font-['Inter'] text-[12px] tracking-[-0.1px] text-[#555]">
          <div className="h-[62px] border border-[#cfcfcf] bg-[#fafafa] pl-[6px] pt-[7px] leading-[16px]">Pages</div>
          <div className="mt-[6px] h-[78px] border border-[#cfcfcf] bg-[#fafafa] pl-[6px] pt-[7px] leading-[16px]">Filters</div>
          <Marks />
        </div>
        <div className="ml-[6px] flex w-[945px] flex-col font-['Inter'] text-[12px] tracking-[-0.1px] text-[#555]">
          <div className="flex h-[28px] shrink-0 items-center border border-[#cfcfcf] bg-[#fafafa]">
            <div className="flex h-full w-[125px] items-center border-r border-[#cfcfcf] pl-[7px]">
              <svg width="12" height="12"><path d="M1.500 0v2.500M5.500 0v2.500M9.500 0v2.500M1.500 4v8M5.500 4v8M9.500 4v8" stroke="#555" strokeWidth="2" /></svg>
              <span className="ml-[6px]">Columns</span>
            </div>
          </div>
          <div className="mt-[6px] flex h-[28px] shrink-0 items-center border border-[#cfcfcf] bg-[#fafafa]">
            <div className="flex h-full w-[125px] items-center border-r border-[#cfcfcf] pl-[6px]">
              <svg width="12" height="10"><path d="M0 1h2.500M0 5h2.500M0 9h2.500M4 1h8M4 5h8M4 9h8" stroke="#555" strokeWidth="1.800" /></svg>
              <span className="ml-[7px]">Rows</span>
            </div>
          </div>
          <div className="mt-[6px] flex gap-[6px] tracking-normal">
            <div className="w-[785px] shrink-0">
              <div className="h-[423px] border border-[#cfcfcf] bg-black"><Cloud /></div>
              <div className="mt-[6px] h-[90px] border border-[#cfcfcf] bg-[#fafafa] pt-[35px] pl-[144px] font-['Open_Sans'] text-[12px] leading-[17px] tracking-[-0.04px]"><span className="whitespace-pre">s about Crop.  Size shows count of Crop.</span></div>
            </div>
            <Legend />
          </div>
        </div>
      </div>
      <SheetTabs />
      <StatusBar />
      <Taskbar />
      <Preview />
    </div>
  );
}
